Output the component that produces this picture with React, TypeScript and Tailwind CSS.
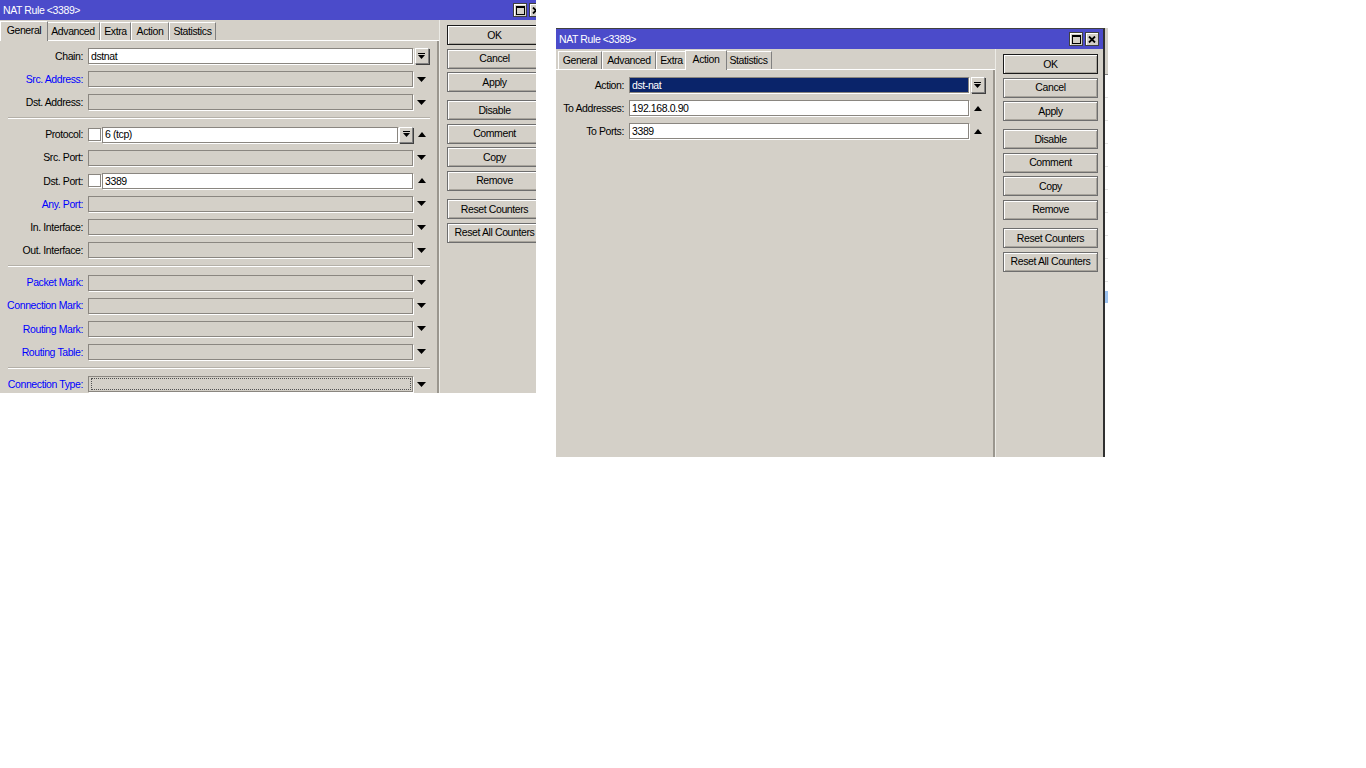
import React from 'react';

type Field = {
  label: string;
  blue?: boolean;
  value?: string;
  kind: 'white' | 'off' | 'selected';
  check?: boolean;
  innerCombo?: boolean;
  tail: 'down' | 'up' | 'combo';
  focus?: boolean;
};

type Row = Field | 'sep';

const FONT = "font-['Liberation_Sans',Arial,sans-serif] text-[10.5px] tracking-[-0.4px] leading-none";

const leftRows: Row[] = [
  { label: 'Chain:', value: 'dstnat', kind: 'white', tail: 'combo' },
  { label: 'Src. Address:', blue: true, kind: 'off', tail: 'down' },
  { label: 'Dst. Address:', kind: 'off', tail: 'down' },
  'sep',
  { label: 'Protocol:', check: true, value: '6 (tcp)', kind: 'white', innerCombo: true, tail: 'up' },
  { label: 'Src. Port:', kind: 'off', tail: 'down' },
  { label: 'Dst. Port:', check: true, value: '3389', kind: 'white', tail: 'up' },
  { label: 'Any. Port:', blue: true, kind: 'off', tail: 'down' },
  { label: 'In. Interface:', kind: 'off', tail: 'down' },
  { label: 'Out. Interface:', kind: 'off', tail: 'down' },
  'sep',
  { label: 'Packet Mark:', blue: true, kind: 'off', tail: 'down' },
  { label: 'Connection Mark:', blue: true, kind: 'off', tail: 'down' },
  { label: 'Routing Mark:', blue: true, kind: 'off', tail: 'down' },
  { label: 'Routing Table:', blue: true, kind: 'off', tail: 'down' },
  'sep',
  { label: 'Connection Type:', blue: true, kind: 'off', tail: 'down', focus: true },
];

const rightRows: Row[] = [
  { label: 'Action:', value: 'dst-nat', kind: 'selected', tail: 'combo' },
  { label: 'To Addresses:', value: '192.168.0.90', kind: 'white', tail: 'up' },
  { label: 'To Ports:', value: '3389', kind: 'white', tail: 'up' },
];

const tabs = [
  { name: 'General', w: 'w-[44px]', wa: 'w-[48px]' },
  { name: 'Advanced', w: 'w-[54px]', wa: 'w-[58px]' },
  { name: 'Extra', w: 'w-[31px]', wa: 'w-[35px]' },
  { name: 'Action', w: 'w-[38px]', wa: 'w-[42px]' },
  { name: 'Statistics', w: 'w-[47px]', wa: 'w-[51px]' },
];

const DownArrow = () => (
  <svg width="9" height="5" viewBox="0 0 9 5">
    <path d="M0 0h9L4.5 5z" fill="#000" />
  </svg>
);

const UpArrow = () => (
  <svg width="8" height="5" viewBox="0 0 8 5">
    <path d="M4 0L8 5H0z" fill="#000" />
  </svg>
);

const ComboButton = () => (
  <div className="w-[14px] h-[16px] shrink-0 flex items-center justify-center bg-[#d4d0c8] border border-t-white border-l-white border-r-[#808080] border-b-[#808080] shadow-[1px_1px_0_#404040]">
    <svg width="7" height="7" viewBox="0 0 7 7">
      <rect x="0" y="0" width="7" height="1" fill="#000" />
      <path d="M0 2h7L3.5 6z" fill="#000" />
    </svg>
  </div>
);

const sunken = 'border border-[#8a8680] shadow-[1px_1px_0_#ffffff]';

const FormRow = ({ f, labelW }: { f: Field; labelW: string }) => {
  const box =
    f.kind === 'white'
      ? 'bg-white text-black'
      : f.kind === 'selected'
      ? 'bg-[#0a246a] text-white'
      : 'bg-[#d4d0c8]';
  return (
    <div className="h-[16px] flex items-center">
      <div className={`${labelW} shrink-0 text-right whitespace-nowrap ${f.blue ? 'text-[#0000ff]' : 'text-black'}`}>
        {f.label}
      </div>
      <div className="flex-1 ml-[5px] h-[16px] flex items-center gap-[1px]">
        {f.check && <div className={`w-[13px] h-[13px] shrink-0 bg-white ${sunken}`} />}
        <div className={`flex-1 h-[16px] flex items-center pl-[1px] whitespace-nowrap ${sunken} ${box}`}>
          {f.focus ? (
            <div className="w-full h-[12px] mx-[1px] border border-dotted border-[#505050]" />
          ) : (
            <span className="px-[1px]">{f.value}</span>
          )}
        </div>
        {f.innerCombo && <ComboButton />}
      </div>
      <div className="w-[17px] shrink-0 flex items-center justify-center">
        {f.tail === 'down' && <DownArrow />}
        {f.tail === 'up' && <UpArrow />}
        {f.tail === 'combo' && <ComboButton />}
      </div>
    </div>
  );
};

const Separator = () => <div className="ml-[8px] h-[2px] border-t border-[#b4b0a8] border-b border-b-white" />;

const Btn = ({ text, primary, extra }: { text: string; primary?: boolean; extra?: string }) => (
  <div
    className={`w-[95px] h-[20px] shrink-0 flex items-center justify-center text-black bg-[#d4d0c8] border shadow-[inset_1px_1px_0_#ffffff,inset_-1px_-1px_0_#a8a49c] ${
      primary ? 'border-[#1a1a1a]' : 'border-[#6e6e6e]'
    } ${extra ?? ''}`}
  >
    {text}
  </div>
);

const TitleButtons = () => (
  <div className="flex items-center gap-[2px]">
    <div className="w-[14px] h-[14px] flex items-center justify-center bg-[#d4d0c8] border border-[#404040] shadow-[inset_1px_1px_0_#ffffff]">
      <svg width="9" height="9" viewBox="0 0 9 9">
        <rect x="0.5" y="0.5" width="8" height="8" fill="none" stroke="#000" />
        <rect x="0" y="0" width="9" height="2" fill="#000" />
      </svg>
    </div>
    <div className="w-[14px] h-[14px] flex items-center justify-center bg-[#d4d0c8] border border-[#404040] shadow-[inset_1px_1px_0_#ffffff]">
      <svg width="8" height="7" viewBox="0 0 8 7">
        <path d="M1 0.5L7 6.5M7 0.5L1 6.5" stroke="#000" strokeWidth="1.8" />
      </svg>
    </div>
  </div>
);

const NatWindow = ({
  active,
  rows,
  labelW,
  className,
}: {
  active: string;
  rows: Row[];
  labelW: string;
  className: string;
}) => (
  <div className={`flex flex-col bg-[#d4d0c8] border-t border-[#404040] border-r-[2px] border-r-[#303030] ${FONT} ${className}`}>
    {/* Title */}
    <div className="h-[20px] shrink-0 bg-[#4b4bca] flex items-center justify-between pl-[3px] pr-[4px]">
      <span className="text-white">NAT Rule &lt;3389&gt;</span>
      <TitleButtons />
    </div>

    <div className="flex-1 flex min-h-0">
      {/* Tabs + form */}
      <div className="w-[439px] shrink-0 flex flex-col">
        <div className="h-[21px] shrink-0 flex items-end pl-[2px] border-b border-white">
          {tabs.map((t) =>
            t.name === active ? (
              <div
                key={t.name}
                className={`${t.wa} -mx-[2px] h-[20px] -mb-px relative z-10 flex items-center justify-center pb-[2px] bg-[#d4d0c8] border-t border-l border-white border-r border-r-[#808080] text-black`}
              >
                {t.name}
              </div>
            ) : (
              <div
                key={t.name}
                className={`${t.w} h-[18px] flex items-center justify-center bg-[#d4d0c8] border-t border-l border-white border-r border-r-[#808080] text-black`}
              >
                {t.name}
              </div>
            )
          )}
        </div>
        <div className="flex-1 flex flex-col gap-[7.15px] pt-[7px] pr-[7px] border-r-[2px] border-r-[#9a968e]">
          {rows.map((r, i) => (r === 'sep' ? <Separator key={i} /> : <FormRow key={i} f={r} labelW={labelW} />))}
        </div>
      </div>

      {/* Buttons */}
      <div className="flex-1 flex flex-col gap-[3.5px] pt-[5px] pl-[7px] border-l border-[#ecebe6]">
        <Btn text="OK" primary />
        <Btn text="Cancel" />
        <Btn text="Apply" />
        <Btn text="Disable" extra="mt-[4.5px]" />
        <Btn text="Comment" />
        <Btn text="Copy" />
        <Btn text="Remove" />
        <Btn text="Reset Counters" extra="mt-[5px]" />
        <Btn text="Reset All Counters" />
      </div>
    </div>
  </div>
);

export default function App() {
  return (
    <div className="relative w-[1366px] h-[768px] bg-white overflow-hidden">
      {/* left window, cropped */}
      <div className="absolute left-0 top-0 w-[536px] h-[393px] overflow-hidden">
        <NatWindow active="General" rows={leftRows} labelW="w-[83px]" className="w-[549px] h-[430px] -mt-px" />
      </div>

      {/* right window */}
      <NatWindow
        active="Action"
        rows={rightRows}
        labelW="w-[68px]"
        className="absolute left-[556px] top-[28px] w-[549px] h-[429px]"
      />

      {/* sliver of the window behind */}
      <div className="absolute left-[1105px] top-[28px] w-[3px] h-[429px] flex flex-col overflow-hidden">
        <div className="h-[46px] bg-[#d4d0c8]" />
        <div className="h-px bg-[#808080]" />
        <div className="h-[216px] bg-[repeating-linear-gradient(to_bottom,#ffffff_0,#ffffff_22px,#e2e2e2_22px,#e2e2e2_23px)]" />
        <div className="h-[12px] bg-[#9cc2f0]" />
        <div className="flex-1 bg-white" />
      </div>
    </div>
  );
}
